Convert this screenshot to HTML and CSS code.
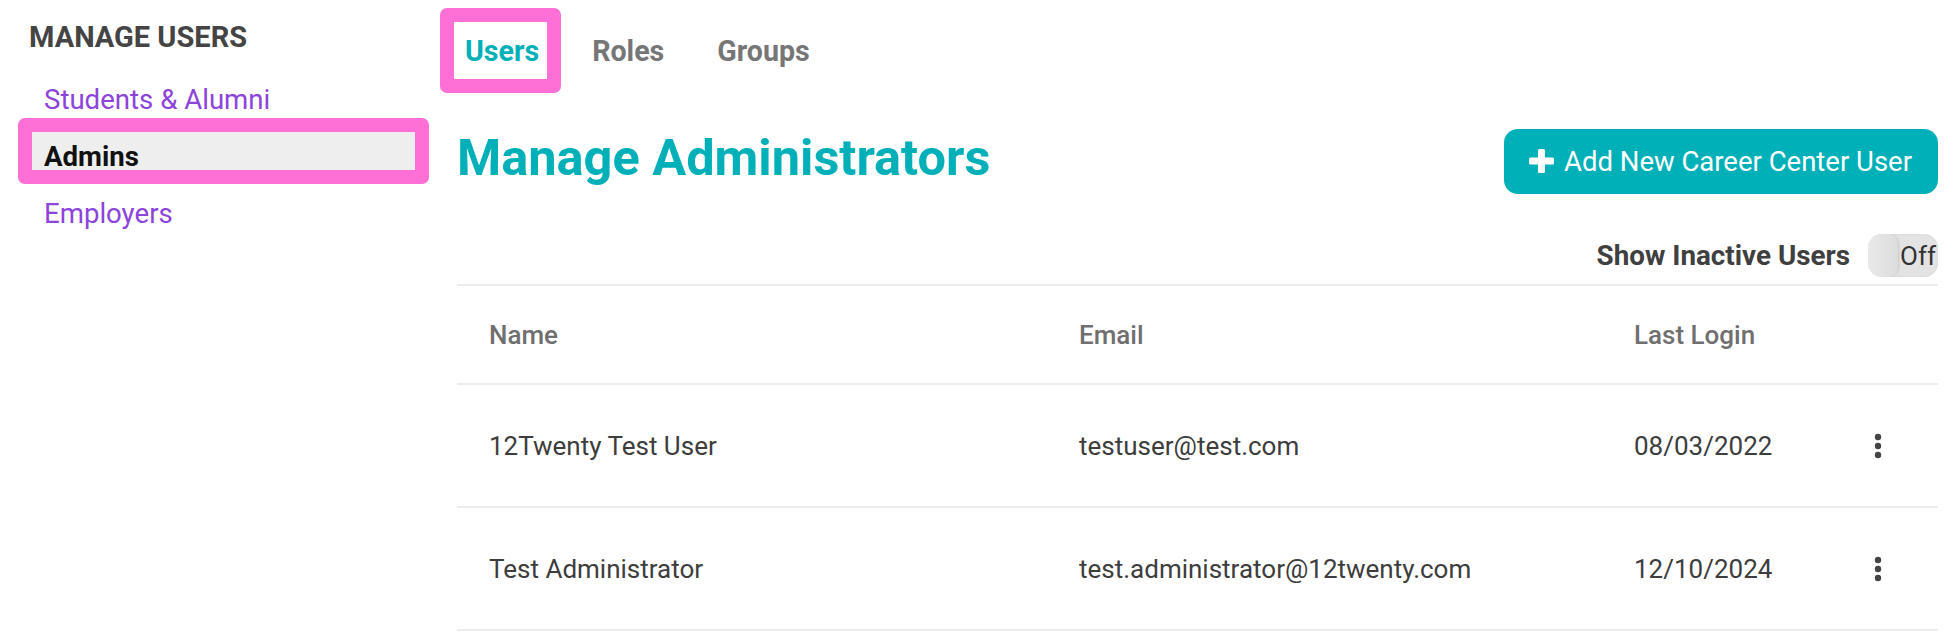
FILE: index.html
```html
<!DOCTYPE html>
<html lang="en">
<head>
<meta charset="utf-8">
<title>Manage Administrators</title>
<link rel="stylesheet" href="styles.css">
</head>
<body>
<div class="page">
  <aside class="sidebar">
    <h2 class="sidebar-title">MANAGE USERS</h2>
    <nav class="side-nav">
      <a class="side-link">Students &amp; Alumni</a>
      <a class="side-link active">Admins</a>
      <a class="side-link">Employers</a>
    </nav>
  </aside>
  <main class="main">
    <div class="tabs">
      <a class="tab active">Users</a>
      <a class="tab">Roles</a>
      <a class="tab">Groups</a>
    </div>
    <div class="title-row">
      <h1 class="title">Manage Administrators</h1>
      <button class="add-btn">
        <svg class="plus" width="25" height="24" viewBox="0 0 25 24"><rect x="0" y="8.5" width="25" height="7" rx="1.5" fill="#fff"/><rect x="9" y="0" width="7" height="24" rx="1.5" fill="#fff"/></svg>
        <span>Add New Career Center User</span>
      </button>
    </div>
    <div class="filter-row">
      <span class="filter-label">Show Inactive Users</span>
      <span class="toggle"><span class="toggle-text">Off</span></span>
    </div>
    <div class="table">
      <div class="row head">
        <div class="cell">Name</div>
        <div class="cell">Email</div>
        <div class="cell">Last Login</div>
        <div class="cell"></div>
      </div>
      <div class="row">
        <div class="cell">12Twenty Test User</div>
        <div class="cell">testuser@test.com</div>
        <div class="cell">08/03/2022</div>
        <div class="cell action"><svg class="kebab" width="8" height="26" viewBox="0 0 8 26"><circle cx="4" cy="4" r="3.2"/><circle cx="4" cy="13" r="3.2"/><circle cx="4" cy="22" r="3.2"/></svg></div>
      </div>
      <div class="row">
        <div class="cell">Test Administrator</div>
        <div class="cell">test.administrator@12twenty.com</div>
        <div class="cell">12/10/2024</div>
        <div class="cell action"><svg class="kebab" width="8" height="26" viewBox="0 0 8 26"><circle cx="4" cy="4" r="3.2"/><circle cx="4" cy="13" r="3.2"/><circle cx="4" cy="22" r="3.2"/></svg></div>
      </div>
    </div>
  </main>
</div>
</body>
</html>
```

FILE: styles.css
```css
* { box-sizing: border-box; }
html, body { margin: 0; padding: 0; background: #fff; }
body { font-family: Roboto, "Liberation Sans", Arial, sans-serif; color: #3d3d3d; }

.page { display: flex; width: 1960px; height: 638px; overflow: hidden; }

.sidebar { width: 457px; flex: none; padding: 20px 0 0 29px; }
.sidebar-title { margin: 0; font-size: 29px; line-height: 35px; font-weight: 700; color: #444; letter-spacing: 0; }
.side-nav { display: flex; flex-direction: column; gap: 19px; margin: 20px 0 0 3px; width: 383px; }
.side-link { position: relative; display: flex; align-items: flex-end; height: 38px; padding-left: 12px; font-size: 27.6px; line-height: 26px; color: #8c44db; }
.side-link.active { background: #eeeeee; color: #111; font-weight: 700; }
.side-link.active::after { content: ""; position: absolute; inset: -14px; border: 14px solid #fe70d6; border-radius: 7px; }

.main { width: 1481px; flex: none; padding-top: 22px; }

.tabs { display: flex; gap: 34px; margin-left: -3px; height: 57px; }
.tab { position: relative; display: block; padding: 2px 8px 0 11px; font-size: 28.6px; line-height: 55px; font-weight: 700; color: #767676; }
.tab.active { color: #00b0b9; }
.tab.active::after { content: ""; position: absolute; inset: -14px; border: 14px solid #fe70d6; border-radius: 7px; }

.title-row { display: flex; justify-content: space-between; align-items: center; margin-top: 49px; }
.title { margin: 0; padding-bottom: 6px; font-size: 50.5px; line-height: 60px; font-weight: 700; color: #00b0b9; }
.add-btn { display: flex; align-items: center; gap: 10px; height: 65px; padding: 0 26px 0 25px; border: 0; border-radius: 14px; background: #00b0b9; color: #fff; font-family: inherit; font-size: 27.5px; }
.plus { display: block; }

.filter-row { display: flex; justify-content: flex-end; align-items: center; gap: 18px; margin-top: 40px; margin-bottom: 7px; }
.filter-label { font-size: 27.8px; font-weight: 700; color: #3f3f3f; }
.toggle { position: relative; display: flex; align-items: center; width: 70px; height: 43px; padding-left: 32px; border-radius: 14px; background: #e3e3e3; box-shadow: inset 0 0 2px rgba(0,0,0,0.08); overflow: hidden; }
.toggle::before { content: ""; position: absolute; left: 0; top: 0; width: 30px; height: 43px; border-radius: 14px 10px 10px 14px; background: linear-gradient(90deg, #e9e9e9, #dcdcdc); box-shadow: 1px 0 2px rgba(0,0,0,0.12); }
.toggle-text { position: relative; font-size: 26px; color: #333; }

.table { border-top: 2px solid #ececec; }
.row { display: grid; grid-template-columns: 590px 555px 243px 1fr; align-items: center; height: 123px; border-bottom: 2px solid #ececec; font-size: 26px; color: #3d3d3d; }
.row.head { height: 99px; font-weight: 500; color: #6f6f6f; }
.cell { padding-left: 32px; white-space: nowrap; }
.cell.action { padding-left: 29px; }
.kebab { display: block; fill: #444; }
```
